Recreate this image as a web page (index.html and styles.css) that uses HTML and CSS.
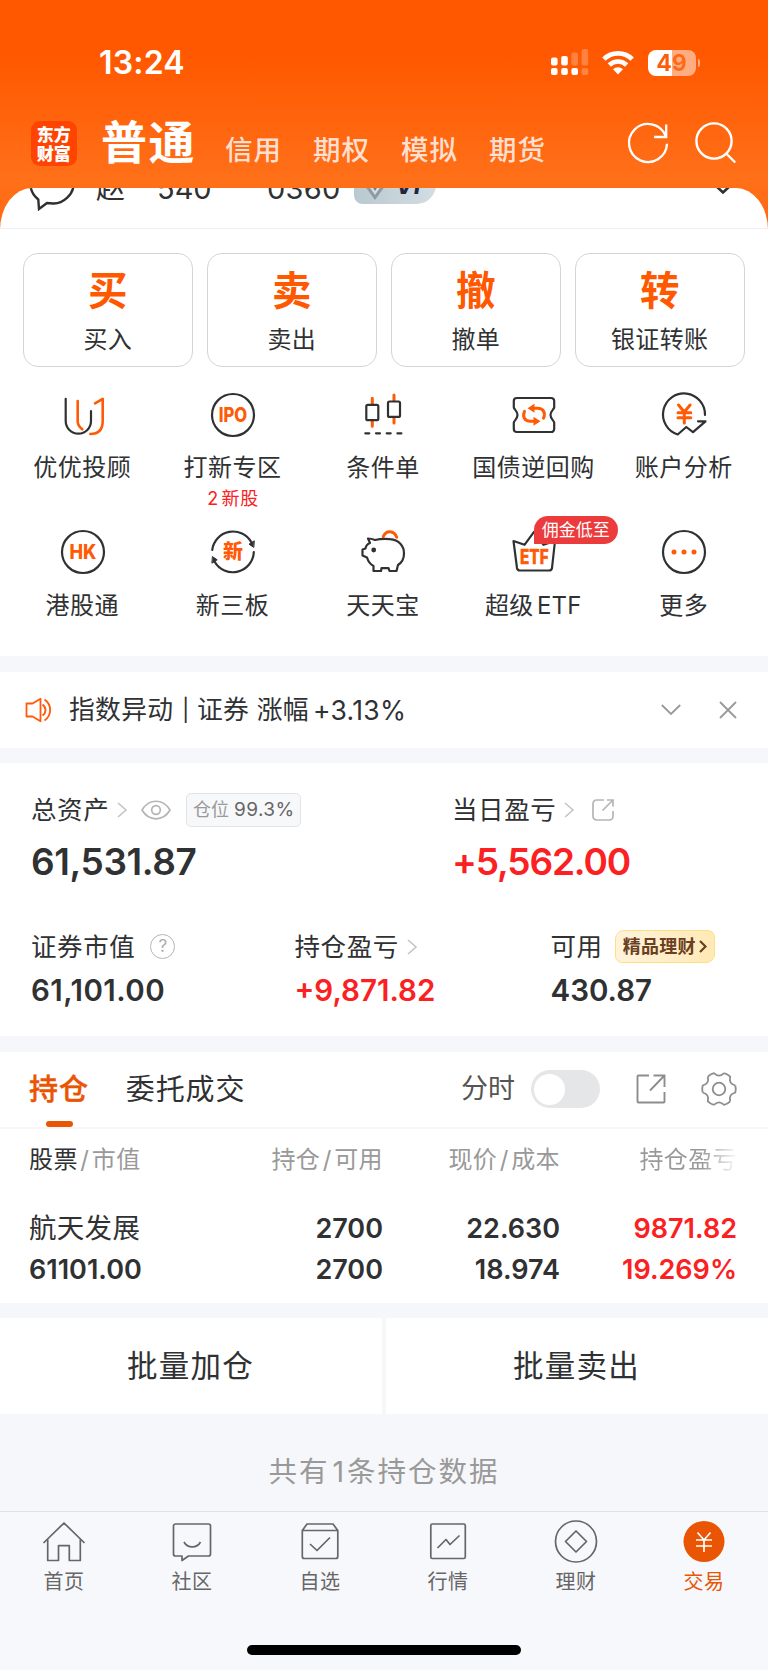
FILE: index.html
```html
<!DOCTYPE html>
<html lang="zh-CN">
<head>
<meta charset="utf-8">
<title>交易</title>
<link rel="stylesheet" href="styles.css">
</head>
<body>
<div class="app">
  <header class="header">
    <div class="status">
      <span class="time">13:24</span>
      <div class="status-icons">
        <svg class="signal" width="38" height="27" viewBox="0 0 38 27" fill="#fff">
          <rect x="0" y="8.5" width="6.6" height="8" rx="2"/><rect x="0" y="19" width="6.6" height="7" rx="2"/>
          <rect x="10.2" y="7" width="6.6" height="9.5" rx="2"/><rect x="10.2" y="19" width="6.6" height="7" rx="2"/>
          <rect x="20.4" y="3.5" width="6.6" height="13" rx="2" opacity=".25"/><rect x="20.4" y="19" width="6.6" height="7" rx="2"/>
          <rect x="30.6" y="0" width="6.6" height="16.5" rx="2" opacity=".25"/><rect x="30.6" y="19" width="6.6" height="7" rx="2" opacity=".25"/>
        </svg>
        <svg class="wifi" width="32" height="25" viewBox="0 0 32 25" fill="none" stroke="#fff" stroke-width="4.6">
          <path d="M1.8 9.2a20.3 20.3 0 0 1 28.4 0"/><path d="M7.3 15a12.4 12.4 0 0 1 17.4 0"/>
          <path d="M16 24.5l-5-5.2a7.2 7.2 0 0 1 10 0z" fill="#fff" stroke="none"/>
        </svg>
        <div class="battery"><span class="battery-text">49</span></div>
        <span class="battery-nub"></span>
      </div>
    </div>
    <nav class="accounts">
      <div class="logo"><span>东方</span><span>财富</span></div>
      <span class="acct-main">普通</span>
      <span class="acct">信用</span><span class="acct">期权</span><span class="acct">模拟</span><span class="acct">期货</span>
      <div class="head-icons">
        <svg width="44" height="44" viewBox="0 0 44 44" fill="none" stroke="#fff" stroke-width="2.3">
          <path d="M41 22.800A19 19 0 1 1 39.600 14.800M40.200 3.500v12.500H28"/>
        </svg>
        <svg width="44" height="44" viewBox="0 0 44 44" fill="none" stroke="#fff" stroke-width="2.4">
          <circle cx="21" cy="20" r="17.6"/><path d="M33.2 32.5l9 9"/>
        </svg>
      </div>
    </nav>
  </header>

  <section class="sheet">
    <div class="user">
      <svg class="chat" width="46" height="46" viewBox="0 0 46 46" fill="none" stroke="#2f2f2f" stroke-width="2.4">
        <path d="M9.3 34.5C4.500 30.500 1.500 25 1.500 19.500C1.500 9.500 11 2 23 2s21.500 7.500 21.500 17.500S34 39 24 38.500L18 38l-8 6z"/>
      </svg>
      <span class="user-name">赵</span><span class="user-a">540</span><span class="user-b">0360</span>
      <span class="vip">
        <svg width="28" height="28" viewBox="0 0 28 28" fill="none"><path d="M1 9l13 18L27 9z" fill="#8d9aa1"/><path d="M5 9l9 13 9-13z" fill="#d5dde0"/><path d="M8.500 9l5.500 9 5.500-9z" fill="#6f7d85"/></svg>
        <i>VI</i>
      </span>
      <svg class="user-more" width="18" height="12" viewBox="0 0 18 12" fill="none" stroke="#2f2f2f" stroke-width="2.6"><path d="M1 2l8 7.500L17 2"/></svg>
    </div>

    <div class="cards">
      <div class="card"><b>买</b><span>买入</span></div>
      <div class="card"><b>卖</b><span>卖出</span></div>
      <div class="card"><b>撤</b><span>撤单</span></div>
      <div class="card"><b>转</b><span>银证转账</span></div>
    </div>

    <div class="grid">
      <div class="cell">
        <svg class="ico" viewBox="0 0 44 44"><path d="M4.700 5.800V28a12.650 12.650 0 0 0 25.300 0V18"/><path class="o" d="M16.700 8v20.500c0 3 1.600 5.500 4.600 7.800M34 10.300l7.700-4.500V28c0 8-4 13-12.400 13"/></svg>
        <span class="label">优优投顾</span>
      </div>
      <div class="cell">
        <svg class="ico" viewBox="0 0 44 44"><circle cx="22" cy="22" r="21"/><text class="ico-text" x="22" y="29" font-size="19.500" textLength="28.500" lengthAdjust="spacingAndGlyphs">IPO</text></svg>
        <span class="label">打新专区</span><span class="sub"><i>2</i>新股</span>
      </div>
      <div class="cell">
        <svg class="ico" viewBox="0 0 44 44"><path class="o w3" d="M11.300 5.300V11M11.300 28v5.300M33 2v5.500M33 24.500V30"/><rect x="5.300" y="11.800" width="12" height="15.400" rx="1.500"/><rect x="27" y="8.500" width="12" height="15.400" rx="1.500"/><path d="M4.300 40.300h36.500" stroke-dasharray="4 6.700"/></svg>
        <span class="label">条件单</span>
      </div>
      <div class="cell">
        <svg class="ico" viewBox="0 0 44 44"><path d="M4.800 5H39.200a3 3 0 0 1 3 3v6.500c-.3 1.800-3.700 3.500-3.700 7.500s3.400 5.700 3.700 7.500V36a3 3 0 0 1-3 3H4.800a3 3 0 0 1-3-3v-6.500c.3-1.800 3.700-3.500 3.700-7.500s-3.400-5.700-3.700-7.500V8a3 3 0 0 1 3-3z"/><path class="o w3" d="M22 15.200h3.500c6 0 8.300 4.700 6 10M12.500 18.300c-2.300 5.300 0 10 6 10h3.500"/><path class="of" d="M22.500 10.700v9l-7-4.500zM21.500 23.800v9l7-4.500z"/></svg>
        <span class="label">国债逆回购</span>
      </div>
      <div class="cell">
        <svg class="ico" viewBox="0 0 44 44"><path d="M43 22A21 21 0 1 0 15.700 41.500L24.300 34 31 39.200 43.500 28.300H36"/><path class="o w3" d="M16.500 12l5.800 7 5.800-7M22.300 19v11M16 19.700h12.800M16 24.700h12.800"/></svg>
        <span class="label">账户分析</span>
      </div>
      <div class="cell">
        <svg class="ico" viewBox="0 0 44 44"><circle cx="22" cy="22" r="21"/><text class="ico-text" x="22" y="29" font-size="19.500" textLength="27" lengthAdjust="spacingAndGlyphs">HK</text></svg>
        <span class="label">港股通</span>
      </div>
      <div class="cell">
        <svg class="ico" viewBox="0 0 44 44"><path d="M1.200 20A21 21 0 0 1 40.500 12.500M42.800 22A21 21 0 0 1 3.500 31.500"/><path class="bf" stroke-width="1" d="M43 11l-5 3.200 4.500 3zM1.200 33l5-3.200-4.500-3z"/><text class="ico-text" x="22" y="29" font-size="20">新</text></svg>
        <span class="label">新三板</span>
      </div>
      <div class="cell">
        <svg class="ico" viewBox="0 0 44 44"><path class="o w3" d="M22.300 6.500c3-7 11-6 13.400.8"/><path d="M7 8.500c2.500 0 4.500.5 7 1.500 5-1.200 10-1.400 15-.8C38 10 43 16 43 23.500c0 5-2 9-6 11.500l-1.500 6h-7l-1-2.800h-7L20 41h-7.500v-5C9 34 7 31 6 27.500l-4.500-2v-6l3-1c.3-2 2-4.500 4.500-5.500z"/><circle class="bf" cx="12.700" cy="20" r="1.300"/></svg>
        <span class="label">天天宝</span>
      </div>
      <div class="cell">
        <svg class="ico" viewBox="0 0 44 44"><path d="M1.500 11l11 3.800L22 1.800l9.500 13L43 11l-3 27a3 3 0 0 1-3 2.500H8A3 3 0 0 1 5 38z"/><text class="ico-text heavy" x="22.300" y="33.500" font-size="20" textLength="28.500" lengthAdjust="spacingAndGlyphs">ETF</text></svg>
        <span class="badge">佣金低至</span>
        <span class="label etf">超级 ETF</span>
      </div>
      <div class="cell">
        <svg class="ico" viewBox="0 0 44 44"><circle cx="22" cy="22" r="21"/><path class="of" d="M9.500 22a2.500 2.500 0 1 0 5 0a2.500 2.500 0 1 0-5 0M19.500 22a2.500 2.500 0 1 0 5 0a2.500 2.500 0 1 0-5 0M29.500 22a2.500 2.500 0 1 0 5 0a2.500 2.500 0 1 0-5 0"/></svg>
        <span class="label">更多</span>
      </div>
    </div>
  </section>

  <section class="notice">
    <svg width="28" height="26" viewBox="0 0 28 26" fill="none" stroke="#ff5a0a" stroke-width="1.800" stroke-linejoin="round"><path d="M1.500 6.500h6l8-4.700v22.500l-8-4.800h-6zM17.500 7.500c4 3 4 8 0 11M19.500 2.500c7.500 5 7.500 16 0 21"/></svg>
    <div class="notice-text"><span>指数异动</span><span class="pipe">|</span><span>证券 涨幅</span><span class="pct">+3.13%</span></div>
    <svg class="n-down" width="20" height="12" viewBox="0 0 20 12" fill="none" stroke="#999" stroke-width="1.800"><path d="M.8 1l9.200 9L19.200 1"/></svg>
    <svg width="18" height="18" viewBox="0 0 18 18" fill="none" stroke="#999" stroke-width="1.800"><path d="M1 1l16 16M17 1L1 17"/></svg>
  </section>

  <section class="assets">
    <div class="row-top">
      <div class="col">
        <div class="line">
          <span class="title">总资产</span>
          <svg class="chev" viewBox="0 0 10 16"><path d="M1 1l8 7-8 7"/></svg>
          <svg class="eye" width="30" height="20" viewBox="0 0 30 20" fill="none" stroke="#b5b5b8" stroke-width="1.700"><path d="M1 10C8-1.700 22-1.700 29 10C22 21.700 8 21.700 1 10z"/><circle cx="15" cy="10" r="4.300"/></svg>
          <span class="tag">仓位 <em>99.3%</em></span>
        </div>
        <div class="big">61,531.87</div>
      </div>
      <div class="col">
        <div class="line">
          <span class="title">当日盈亏</span>
          <svg class="chev" viewBox="0 0 10 16"><path d="M1 1l8 7-8 7"/></svg>
          <svg class="share" width="22" height="22" viewBox="0 0 22 22" fill="none" stroke="#b5b5b8" stroke-width="1.700"><path d="M12 1H4.500A3.500 3.500 0 0 0 1 4.500v13A3.500 3.500 0 0 0 4.500 21h13a3.500 3.500 0 0 0 3.500-3.500V12M15 1h6v6.500M21 1L10.500 11.500"/></svg>
        </div>
        <div class="big tight red">+5,562.00</div>
      </div>
    </div>
    <div class="row-sub">
      <div class="col">
        <div class="line"><span class="title">证券市值</span><span class="help">?</span></div>
        <div class="mid wide">61,101.00</div>
      </div>
      <div class="col">
        <div class="line"><span class="title">持仓盈亏</span><svg class="chev" viewBox="0 0 10 16"><path d="M1 1l8 7-8 7"/></svg></div>
        <div class="mid red">+9,871.82</div>
      </div>
      <div class="col">
        <div class="line"><span class="title">可用</span><span class="gold">精品理财<svg width="8" height="13" viewBox="0 0 8 13" fill="none" stroke="#6b3f22" stroke-width="2.200"><path d="M1 1l5.500 5.500L1 12"/></svg></span></div>
        <div class="mid">430.87</div>
      </div>
    </div>
  </section>

  <section class="holdings">
    <div class="tabs">
      <span class="tab on">持仓</span>
      <span class="tab">委托成交</span>
      <span class="fen">分时</span>
      <span class="toggle"></span>
      <svg class="export" width="30" height="30" viewBox="0 0 30 30" fill="none" stroke="#8d8d8d" stroke-width="1.900"><path d="M13 1.500H2.500a1 1 0 0 0-1 1v25a1 1 0 0 0 1 1h25a1 1 0 0 0 1-1V18M17.500 1.500h11V13M28.500 1.500L14 16.500"/></svg>
      <svg class="gear" width="36" height="36" viewBox="-18 -18 36 36" fill="none" stroke="#8d8d8d" stroke-width="1.800">
        <defs><path id="tooth" d="M16.300-3.500Q17.300 0 16.300 3.500Q12.600 4.740 11.500 6.650Q10.400 8.550 11.180 12.360"/></defs>
        <use href="#tooth"/><use href="#tooth" transform="rotate(60)"/><use href="#tooth" transform="rotate(120)"/><use href="#tooth" transform="rotate(180)"/><use href="#tooth" transform="rotate(240)"/><use href="#tooth" transform="rotate(300)"/>
        <circle r="6.300"/>
      </svg>
    </div>
    <div class="table thead">
      <span class="c1"><b>股票</b> / 市值</span><span>持仓 / 可用</span><span>现价 / 成本</span><span class="fade">持仓盈亏</span>
    </div>
    <div class="table tbody">
      <span class="c1 name">航天发展</span><span>2700</span><span>22.630</span><span class="red">9871.82</span>
      <span class="c1">61101.00</span><span>2700</span><span>18.974</span><span class="red">19.269%</span>
    </div>
  </section>

  <div class="batch"><span>批量加仓</span><span>批量卖出</span></div>
  <div class="count">共有<i>1</i>条持仓数据</div>

  <nav class="tabbar">
    <div class="item"><svg viewBox="0 0 44 44"><path d="M1.500 22L22 2l20.500 20M5.700 18.500V39.500H16.500V24.700h10.800V39.500H38.300V18.500"/></svg><span>首页</span></div>
    <div class="item"><svg viewBox="0 0 44 44"><path d="M5.500 3h33a2 2 0 0 1 2 2v28a2 2 0 0 1-2 2H18.500l-6.500 4.500V35H5.500a2 2 0 0 1-2-2V5a2 2 0 0 1 2-2zM14 21c3.500 6.500 13 6.500 16.500 0"/></svg><span>社区</span></div>
    <div class="item"><svg viewBox="0 0 44 44"><path d="M4.300 9.500L9 3h26l4.800 6.500v26a2 2 0 0 1-2 2H6.300a2 2 0 0 1-2-2zM4.300 9.500h35.500M12 23l7 6.500L32 16.500"/></svg><span>自选</span></div>
    <div class="item"><svg viewBox="0 0 44 44"><rect x="4.800" y="3" width="34.500" height="34.500" rx="1.500"/><path d="M11.500 27l8.500-8.500 4 5L33.500 14.500"/></svg><span>行情</span></div>
    <div class="item"><svg viewBox="0 0 44 44"><circle cx="22" cy="20.500" r="20.500"/><path d="M22 10l10.500 10.500L22 31 11.500 20.500z"/></svg><span>理财</span></div>
    <div class="item active"><svg viewBox="0 0 44 44"><circle class="disc" cx="22" cy="20.500" r="20.500"/><path class="yen" d="M15.500 11.500l6.500 7.500 6.500-7.500M22 19v12M14 19h16M14 25h16"/></svg><span>交易</span></div>
  </nav>
  <div class="home"><span></span></div>
</div>
</body>
</html>
```
FILE: styles.css
```css
* { box-sizing: border-box; }
body {
  margin: 0;
  font-family: Inter, "Noto Sans CJK SC", sans-serif;
  color: #303133;
  background: #f7f8fb;
}
svg { display: block; flex: none; overflow: visible; }
.app { width: 768px; height: 1670px; overflow: hidden; display: flex; flex-direction: column; background: #f6f7fa; }
.app > * { flex: none; }

.header {
  height: 229px;
  margin-bottom: -41.500px;
  background: linear-gradient(#ff5800 0, #ff5800 56px, #ff7019 180px, #ff6710 229px);
  color: #fff;
}
.status { height: 100px; padding: 25px 68px 0 99px; display: flex; justify-content: space-between; align-items: center; }
.time { font-size: 32px; font-weight: 600; letter-spacing: .2px; }
.status-icons { display: flex; align-items: center; }
.wifi { margin-left: 13px; }
.battery {
  margin-left: 14px; width: 48px; height: 26px; border-radius: 8px;
  background: linear-gradient(90deg, #fff 50%, rgba(255,255,255,.5) 50%);
  text-align: center; line-height: 26px;
}
.battery-text {
  font-size: 23px; font-weight: 700;
  background: linear-gradient(90deg, #ff5c08 49%, #ff6a18 49%);
  -webkit-background-clip: text; background-clip: text; color: transparent;
}
.battery-nub { margin-left: 2px; width: 2.500px; height: 8px; border-radius: 0 3px 3px 0; background: rgba(255,255,255,.5); }

.accounts { height: 87px; padding: 0 30px 0 31px; display: flex; align-items: center; }
.logo {
  width: 45.500px; height: 45.500px; border-radius: 9px; background: #ff4300;
  display: flex; flex-direction: column; align-items: center; justify-content: center;
  font: 900 17px/18.500px "Noto Sans CJK SC", sans-serif;
}
.acct-main { margin: -3px 0 0 24.500px; font-size: 46px; line-height: 60px; font-weight: 700; letter-spacing: 1.500px; width: 124px; }
.acct { font-size: 27.500px; line-height: 40px; width: 88px; margin-top: 13px; font-weight: 500; color: #ffdfd0; letter-spacing: 1px; }
.head-icons { margin: -2px 0 0 49px; display: flex; gap: 23px; }

.sheet { background: #fff; border-radius: 32px 32px 0 0 / 42px 42px 0 0; height: 468.500px; overflow: hidden; }
.user { height: 41.500px; border-bottom: 1.500px solid #eeeeef; display: flex; align-items: flex-start; padding-left: 29px; font-size: 29px; line-height: 36px; }
.chat { margin-top: -23px; }
.user > span { margin-top: -17px; }
.user-name { width: 62px; padding-left: 21px; }
.user-a { width: 110px; padding-left: 20px; }
.user-b { width: 107px; padding-left: 20px; letter-spacing: .3px; }
.user .vip {
  display: flex; align-items: center; height: 35px; width: 82px; margin-top: -18.500px; padding-left: 7px; gap: 6px;
  background: linear-gradient(90deg, #b9c9d0, #d3dde2); border-radius: 8px 18px 22px 10px;
}
.vip i { font-size: 25px; font-weight: 700; color: #20263c; line-height: 28px; margin-top: -3px; }
.user-more { margin-left: 278px; margin-top: -5px; }

.cards { display: grid; grid-template-columns: repeat(4, 1fr); gap: 14.300px; padding: 23.500px 23.500px 0 23px; }
.card { height: 114.500px; border: 1.300px solid #d5d5d7; border-radius: 15px; display: flex; flex-direction: column; align-items: center; }
.card b { font-size: 39.500px; line-height: 50px; margin-top: 12.500px; color: #ff5800; }
.card span { font-size: 24px; line-height: 32px; margin-top: 8px; letter-spacing: .3px; }

.grid { display: grid; grid-template-columns: repeat(5, 1fr); grid-auto-rows: 137.500px; padding: 25.500px 8.500px 0 7.500px; }
.cell { position: relative; display: flex; flex-direction: column; align-items: center; }
.ico { width: 44px; height: 44px; fill: none; stroke: #303133; stroke-width: 2.200; stroke-linecap: round; stroke-linejoin: round; }
.ico .o { stroke: #ff5a05; stroke-width: 2.600; }
.ico .w3 { stroke-width: 3; }
.ico .of { fill: #ff5a05; stroke: none; }
.ico .bf { fill: #303133; }
.ico .ico-text { fill: #ff5a05; stroke: none; font-weight: 800; text-anchor: middle; }
.ico .heavy { stroke: #ff5a05; stroke-width: .5; }
.label { font-size: 24px; line-height: 32px; margin: 15.500px 0 0 -1px; letter-spacing: .5px; white-space: nowrap; }
.etf { word-spacing: -3.500px; letter-spacing: .2px; }
.sub { font-size: 18px; line-height: 24px; margin-top: 3px; color: #f92020; letter-spacing: .7px; }
.sub i { font-style: normal; margin-right: 2.500px; }
.badge {
  position: absolute; left: 75px; top: -14.500px; width: 84px; height: 28.500px; border-radius: 14px 14px 14px 0;
  background: #ec3b3c; color: #fff; font-size: 17px; line-height: 28px; text-align: center; white-space: nowrap;
}

.notice { margin-top: 15.500px; height: 76px; background: #fff; padding: 0 31.500px 0 25px; display: flex; align-items: center; }
.notice-text { font-size: 25.800px; line-height: 36px; margin-left: 16px; flex: 1; display: flex; white-space: pre; letter-spacing: .3px; }
.pipe { font-size: 22px; margin: 0 7.500px 0 8.500px; }
.pct { font-size: 26.500px; margin-left: 4px; }
.n-down { margin-right: 38px; }

.assets { margin-top: 15px; height: 273.500px; background: #fff; padding-top: 28px; }
.line { display: flex; align-items: center; height: 38px; }
.title { font-size: 25.500px; line-height: 36px; letter-spacing: .6px; white-space: nowrap; }
.chev { width: 10px; height: 16px; margin-left: 8px; fill: none; stroke: #c4c4c6; stroke-width: 1.600; }
.row-top { display: grid; grid-template-columns: 421px 1fr; padding-left: 31px; }
.row-sub { display: grid; grid-template-columns: 263.500px 256px 1fr; padding-left: 31px; margin-top: 43.500px; }
.eye { margin-left: 14px; }
.share { margin-left: 18px; }
.tag {
  margin-left: 15px; width: 115px; height: 34px; border: 1.300px solid #e3e4e8; border-radius: 5px; background: #f7f8fa;
  color: #999; font-size: 18px; line-height: 32px; text-align: center; white-space: nowrap;
}
.tag em { font-style: normal; font-size: 19px; color: #666; letter-spacing: .4px; }
.big { font-size: 37px; font-weight: 600; line-height: 44px; margin-top: 11.500px; letter-spacing: -.4px; }
.tight { letter-spacing: -1.150px; }
.mid { font-size: 29.500px; font-weight: 600; line-height: 36px; margin-top: 6px; }
.wide { letter-spacing: .45px; }
.red { color: #fb2021; }
.help { margin-left: 15px; width: 25px; height: 25px; border: 1.700px solid #b5b5b8; border-radius: 50%; color: #aaa; font-size: 17px; line-height: 22px; text-align: center; }
.gold {
  margin-left: 12px; width: 100px; height: 32.500px; border-radius: 9px 7px 9px 7px; border: 1.500px solid #ffdf80;
  background: linear-gradient(100deg, #fff3dc, #ffe9b4); color: #6b3f22; font-size: 18px; line-height: 26px; font-weight: 700;
  display: flex; align-items: center; justify-content: center; gap: 3px; white-space: nowrap; letter-spacing: .2px;
}

.holdings { margin-top: 15.500px; height: 251px; background: #fff; }
.tabs { height: 77px; border-bottom: 2px solid #f7f7f9; display: flex; align-items: center; padding-left: 29px; }
.tab { position: relative; font-size: 29px; line-height: 40px; letter-spacing: .9px; white-space: nowrap; margin: 2px 37px 0 0; }
.tab.on { color: #ea5504; font-weight: 500; -webkit-text-stroke: .4px #ea5504; }
.tab.on::after { content: ""; position: absolute; left: 17px; top: 51px; width: 27px; height: 5.500px; border-radius: 3px; background: #ea5504; }
.fen { margin-left: 178.500px; width: 70px; font-size: 27px; line-height: 36px; color: #555; }
.toggle { width: 69px; height: 38px; border-radius: 19px; background: #e5e6e8; padding: 3.500px; }
.toggle::before { content: ""; display: block; width: 31px; height: 31px; border-radius: 50%; background: #fff; }
.export { margin-left: 36px; }
.gear { margin-left: 35.500px; }
.table { display: grid; grid-template-columns: 150px 204px 177px 177px; padding-left: 29px; text-align: right; white-space: nowrap; }
.table .c1 { text-align: left; }
.thead { font-size: 24px; line-height: 32px; margin-top: 15px; color: #999; letter-spacing: .4px; word-spacing: -4.700px; }
.thead b { font-weight: 400; color: #303133; }
.fade { background: linear-gradient(90deg, #999 80%, #fff 101%); -webkit-background-clip: text; background-clip: text; color: transparent; }
.tbody { font-size: 27px; font-weight: 600; line-height: 41px; margin-top: 32px; }
.tbody .name { font-size: 27.500px; font-weight: 400; letter-spacing: .3px; }

.batch { margin-top: 15.500px; display: grid; grid-template-columns: 382px 1fr; gap: 4px; height: 96px; font-size: 30.500px; line-height: 40px; letter-spacing: 1.200px; }
.batch span { background: #fff; display: flex; align-items: center; justify-content: center; padding-right: 1px; }
.count { height: 97px; padding-top: 38px; font-size: 28.500px; line-height: 40px; letter-spacing: 2px; text-align: center; color: #999; }
.count i { font-style: normal; margin: 0 1px 0 3px; }
.tabbar { height: 110px; border-top: 1.300px solid #dfe0e2; background: #f7f8fb; display: grid; grid-template-columns: repeat(6, 1fr); padding-top: 9px; }
.item { display: flex; flex-direction: column; align-items: center; font-size: 20px; line-height: 28px; color: #666; letter-spacing: .4px; }
.item svg { width: 44px; height: 44px; fill: none; stroke: #666; stroke-width: 1.700; stroke-linejoin: round; }
.item span { margin-top: 3px; }
.item.active { color: #ea5504; }
.item .disc { fill: #ea5504; stroke: none; }
.item .yen { stroke: #fff; }
.home { height: 49px; background: #f7f8fb; padding-top: 24px; display: flex; justify-content: center; }
.home span { width: 274px; height: 9.500px; border-radius: 5px; background: #000; }
```
